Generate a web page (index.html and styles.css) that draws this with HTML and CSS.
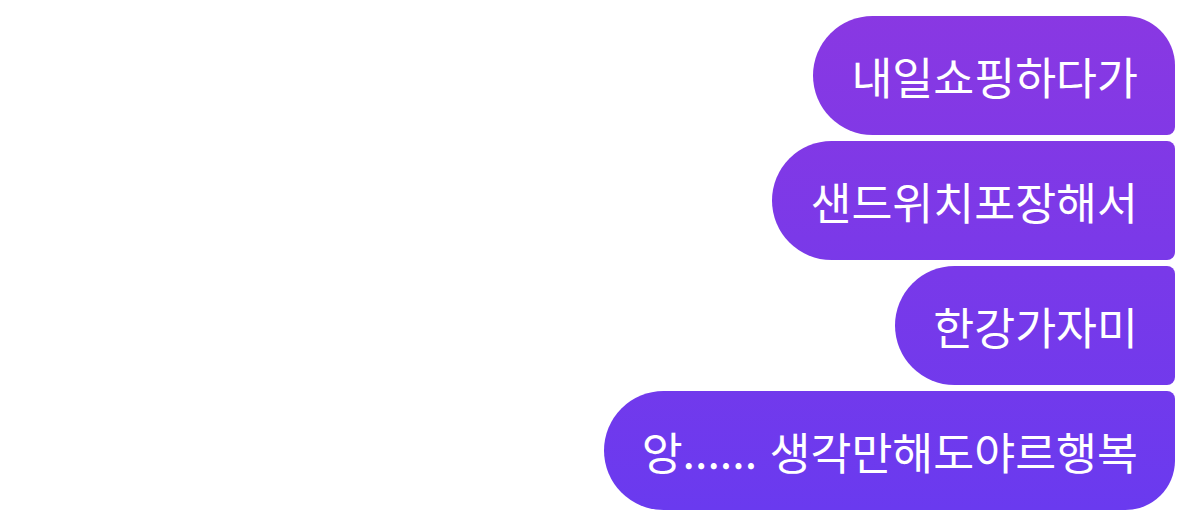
FILE: index.html
```html
<!DOCTYPE html>
<html lang="ko">
<head>
  <meta charset="UTF-8" />
  <meta name="viewport" content="width=device-width, initial-scale=1" />
  <title>Chat</title>
  <link rel="stylesheet" href="styles.css">
</head>
<body>
  <div class="thread">
    <div class="bubble first">내일쇼핑하다가</div>
    <div class="bubble">샌드위치포장해서</div>
    <div class="bubble">한강가자미</div>
    <div class="bubble last">앙...... 생각만해도야르행복</div>
  </div>
</body>
</html>
```

FILE: styles.css
```css
body {
  margin: 0;
  background: #fff;
  font-family: "Noto Sans CJK KR", "Noto Sans", sans-serif;
}
.thread {
  display: flex;
  flex-direction: column;
  align-items: flex-end;
  gap: 6px;
  padding: 16px 24px 0 0;
}
.bubble {
  color: #fff;
  font-size: 44.5px;
  line-height: 53px;
  padding: 33px 37px 33px 38px;
  white-space: nowrap;
  border-radius: 60px 8px 8px 60px;
  background: linear-gradient(180deg, #8a38e2 0px, #6a3aef 510px) fixed;
}
.bubble.first {
  border-top-right-radius: 50px;
}
.bubble.last {
  border-bottom-right-radius: 50px;
}
```
